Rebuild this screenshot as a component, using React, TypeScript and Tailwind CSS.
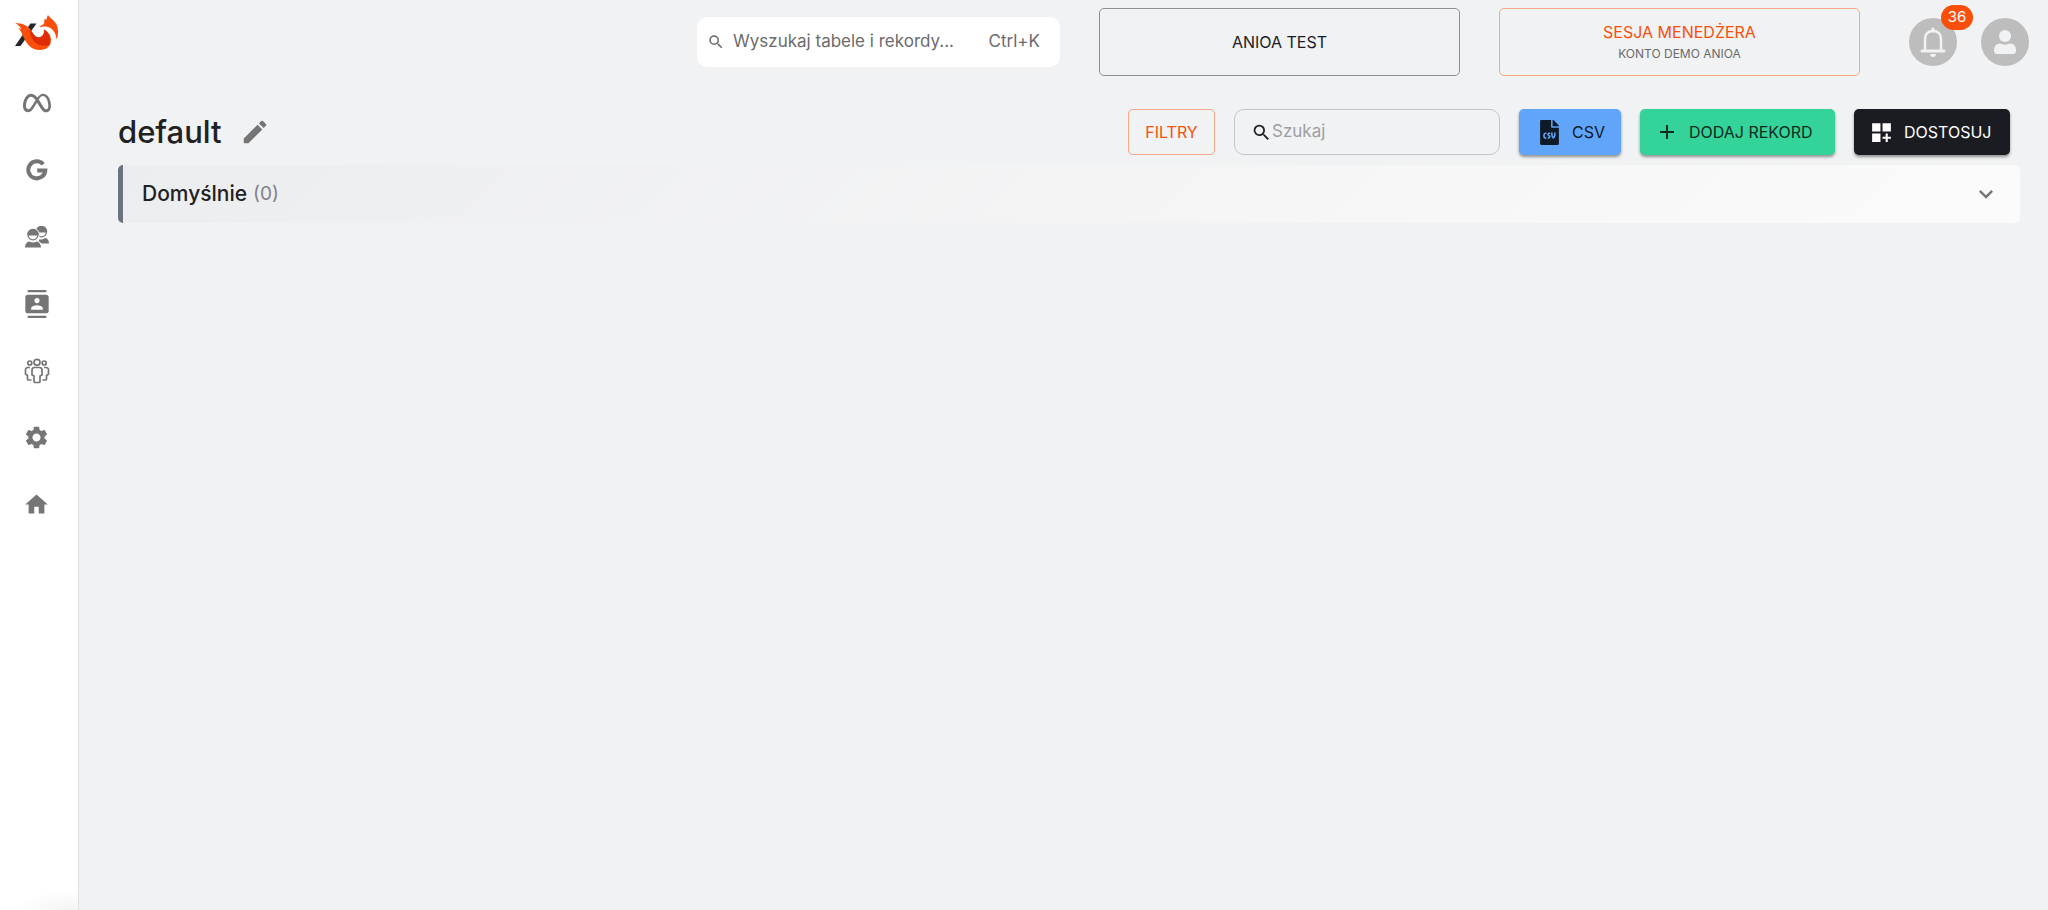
import { FaFileCsv } from "react-icons/fa"
import { FaMeta } from "react-icons/fa6"
import {
  MdAdd,
  MdContacts,
  MdDashboardCustomize,
  MdEdit,
  MdExpandMore,
  MdHome,
  MdSearch,
  MdSettings,
} from "react-icons/md"

function Logo() {
  return (
    <svg viewBox="0 0 44 36" className="h-9 w-11" aria-hidden="true">
      <path d="M15.500 8.500h6L5.500 31H0z" fill="#25262b" />
      <path
        d="M0 8.200C6 8 12 9.500 16 15c3 6 6 8.500 9.500 7 3-1.500 4-4 3.500-7.500 4.500 2.500 7 6 7 10.500 0 6-4.500 10-11 10-9 0-13.500-6-17-14C6.500 17.500 5.500 15 3 13l3.500 1C5 11.500 3 9.500 0 8.200z"
        fill="#f94f0a"
      />
      <path
        d="M14.500 15c1 0 1.800.8 2.500 2 2.500 4.500 5.500 6.300 8.500 5 3-1.500 4-4 3.500-7.500 4.500 2.500 7.500 8 5.500 15.500-9 2-18 0-20-15z"
        fill="#df2c06"
      />
      <path
        d="M33 0c1.500 3.500 10 6 10 16 0 3 0 5.500-1.500 8.500C41 18 38 13 31.500 11.500c-2.500-.300-4.500.300-7.500.500 2-1.500 4-2 5-3.500.500-2 0-3.500 1-4.500l1.500.500C32 3 32 1.500 33 0z"
        fill="#f94f0a"
      />
    </svg>
  )
}

function Google() {
  return (
    <svg
      viewBox="0 0 22 22"
      className="size-[22px]"
      fill="none"
      stroke="currentColor"
      strokeWidth="4"
      aria-hidden="true"
    >
      <path d="M17.200 5.200A8.500 8.500 0 1 0 19.300 11.500H11.200" />
    </svg>
  )
}

function Users() {
  return (
    <svg viewBox="0 0 24 22" className="h-[22px] w-6" fill="currentColor" aria-hidden="true">
      <circle cx="16.500" cy="5.800" r="5" fill="none" stroke="currentColor" strokeWidth="1.200" />
      <path d="M10.900 6.500a5.700 5.700 0 1 1 11.200 0z" />
      <path d="M14 17.500v-4c2 .3 4-.3 6-1.500 2.500.5 4 2.300 4 5.500z" />
      {/* white ring separates the front person from the back one */}
      <circle cx="8" cy="8.800" r="6.800" fill="#ffffff" />
      <path d="M10 14.500c4 .2 7 2 7.300 6.500H10z" fill="#ffffff" />
      <circle cx="8" cy="8.800" r="5" fill="none" stroke="currentColor" strokeWidth="1.200" />
      <path d="M2.400 9.500a5.700 5.700 0 1 1 11.200 0z" />
      <path d="M0 21.500c0-3.500 2-5.700 4.500-6 2 1.200 5 1.200 7 0 2.500.3 4.500 2.500 4.500 6z" />
    </svg>
  )
}

function Team() {
  return (
    <svg
      viewBox="0 0 26 26"
      className="h-[26px] w-[26px]"
      fill="none"
      stroke="currentColor"
      strokeWidth="1.700"
      strokeLinejoin="round"
      aria-hidden="true"
    >
      <circle cx="13" cy="4.300" r="3" />
      <circle cx="5.800" cy="5" r="2" />
      <circle cx="20.200" cy="5" r="2" />
      <path d="M10.500 9.500h5a2.500 2.500 0 0 1 2.500 2.500v5l-2 1v5.500a1 1 0 0 1-1 1h-4a1 1 0 0 1-1-1V18l-2-1v-5a2.500 2.500 0 0 1 2.500-2.500z" />
      <path d="M6 9.500H3.800A2.300 2.300 0 0 0 1.500 12v4l2 1.500V21a1 1 0 0 0 1 1h3M20 9.500h2.200a2.300 2.300 0 0 1 2.300 2.500v4l-2 1.500V21a1 1 0 0 1-1 1h-3" />
    </svg>
  )
}

const navItems = [
  { label: "Meta", icon: <FaMeta size={28} /> },
  { label: "Google", icon: <Google /> },
  { label: "Klienci", icon: <Users /> },
  { label: "Kontakty", icon: <MdContacts size={28} /> },
  { label: "Zespół", icon: <Team /> },
  { label: "Ustawienia", icon: <MdSettings size={27} /> },
  { label: "Strona główna", icon: <MdHome size={27} /> },
]

function Sidebar() {
  return (
    <aside className="flex w-[79px] shrink-0 flex-col items-center border-r border-[#e0e0e0] bg-white bg-[radial-gradient(ellipse_60px_20px_at_74px_100%,#f4f4f4,#ffffff)] pr-[5px] pt-[15px]">
      <a href="#" aria-label="XO" className="mb-[18px]">
        <Logo />
      </a>
      <nav className="flex flex-col">
        {navItems.map((item) => (
          <a
            key={item.label}
            href="#"
            aria-label={item.label}
            className="flex h-[67px] w-12 items-center justify-center text-[#757575]"
          >
            {item.icon}
          </a>
        ))}
      </nav>
    </aside>
  )
}

function Header() {
  return (
    <header className="flex items-center justify-end pr-[19px] pt-2">
      <button className="flex h-[50px] w-[363px] items-center rounded-[10px] bg-white pl-2.5 pr-5 text-[17px] text-[#6b6b6b]">
        <MdSearch size={18} />
        <span className="ml-2">Wyszukaj tabele i rekordy...</span>
        <span className="ml-auto">Ctrl+K</span>
      </button>
      <button className="ml-[39px] h-[68px] w-[361px] rounded-[5px] border border-[#8f9093] text-base text-[#1b1c22]">
        ANIOA TEST
      </button>
      <button className="ml-[39px] flex h-[68px] w-[361px] flex-col items-center justify-center rounded-[5px] border border-[#f7a78a] text-base text-[#f94f0a]">
        <span className="leading-6">SESJA MENEDŻERA</span>
        <span className="text-xs leading-5 text-[#6b6b6b]">KONTO DEMO ANIOA</span>
      </button>
      <button
        aria-label="Powiadomienia"
        className="relative ml-[49px] flex size-12 items-center justify-center rounded-full bg-[#bdbdbd] text-[#f0f2f4]"
      >
        <svg viewBox="0 0 26 30" className="h-[30px] w-[26px]" aria-hidden="true">
          <path
            d="M5 23V12c0-5 3-8 8-8s8 3 8 8v11"
            fill="none"
            stroke="currentColor"
            strokeWidth="2.500"
          />
          <path
            d="M2 24h22M13 2V4"
            stroke="currentColor"
            strokeWidth="3"
            strokeLinecap="round"
          />
          <path d="M10 27h6c0 4-6 4-6 0z" fill="currentColor" />
        </svg>
        <span className="absolute -right-4 -top-[13px] flex h-[25px] w-8 items-center justify-center rounded-full bg-[#f94f0a] text-[15px] text-white">
          36
        </span>
      </button>
      <button
        aria-label="Konto"
        className="ml-6 flex size-12 items-center justify-center rounded-full bg-[#bdbdbd] text-[#f0f2f4]"
      >
        <svg viewBox="0 0 22 24" className="h-6 w-[22px]" fill="currentColor" aria-hidden="true">
          <circle cx="11" cy="6" r="6" />
          <path d="M6 13.500c3 1.500 7 1.500 10 0 4 0 6 3 6 7 0 2-1 3.500-3 3.500H3c-2 0-3-1.500-3-3.500 0-4 2-7 6-7z" />
        </svg>
      </button>
    </header>
  )
}

function Toolbar() {
  return (
    <div className="mt-[33px] flex items-center gap-[19px] pl-[39px] pr-[38px]">
      <div className="flex items-center gap-[18px]">
        <h1 className="text-[31px] font-medium leading-[46px] text-[#212121]">default</h1>
        <button aria-label="Edytuj nazwę" className="text-[#757575]">
          <MdEdit size={30} />
        </button>
      </div>
      <button className="ml-auto h-[46px] w-[87px] rounded-[5px] border border-[#f7a78a] text-base text-[#f94f0a]">
        FILTRY
      </button>
      <label className="flex h-[46px] w-[266px] items-center rounded-[10px] border border-[#c3c4c6] pl-4 text-[#212121]">
        <MdSearch size={21} className="shrink-0" />
        <input
          type="text"
          aria-label="Szukaj"
          placeholder="Szukaj"
          className="w-full min-w-0 bg-transparent text-[17px] outline-none placeholder:text-[#9e9fa1]"
        />
      </label>
      <button className="flex h-[46px] w-[102px] items-center gap-2.5 rounded-[5px] bg-[#60a5fa] pl-[18px] text-base text-[#0e1a28] shadow-[0_2px_3px_rgba(0,0,0,0.4)]">
        <FaFileCsv size={25} />
        CSV
      </button>
      <button className="flex h-[46px] w-[195px] items-center gap-2.5 rounded-[5px] bg-[#34d399] pl-[15px] text-base text-[#0b2a20] shadow-[0_2px_3px_rgba(0,0,0,0.4)]">
        <MdAdd size={24} />
        DODAJ REKORD
      </button>
      <button className="flex h-[46px] w-[156px] items-center gap-2.5 rounded-[5px] bg-[#1b1c22] pl-[15px] text-base text-white shadow-[0_2px_3px_rgba(0,0,0,0.4)]">
        <MdDashboardCustomize size={25} />
        DOSTOSUJ
      </button>
    </div>
  )
}

export default function App() {
  return (
    <div className="flex min-h-screen bg-[#f0f2f4] font-['Inter',sans-serif]">
      <Sidebar />
      <div className="min-w-0 flex-1">
        <Header />
        <main>
          <Toolbar />
          <button
            aria-expanded="false"
            className="ml-[39px] mr-7 mt-[10px] flex h-[58px] w-[calc(100%-67px)] items-center rounded-[5px] border-l-[5px] border-[#6b7280] bg-[linear-gradient(135deg,#ecedef,#fbfbfb)] pl-[19px] pr-5 text-left"
          >
            <span className="text-[21px] font-medium text-[#212121]">Domyślnie</span>
            <span className="ml-1.5 text-[19px] text-[#808186]">(0)</span>
            <MdExpandMore size={28} className="ml-auto text-[#757575]" />
          </button>
        </main>
      </div>
    </div>
  )
}
